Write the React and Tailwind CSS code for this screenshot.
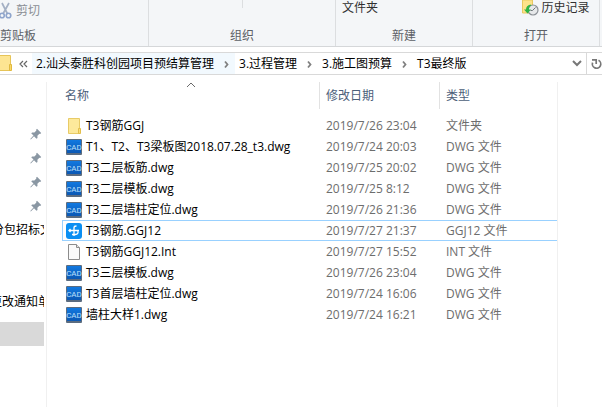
import React, { useState } from 'react';

const CRUMBS = ['2.汕头泰胜科创园项目预结算管理', '3.过程管理', '3.施工图预算', 'T3最终版'];

const FILES = [
  { name: 'T3钢筋GGJ', date: '2019/7/26 23:04', type: '文件夹', icon: 'folder' },
  { name: 'T1、T2、T3梁板图2018.07.28_t3.dwg', date: '2019/7/24 20:03', type: 'DWG 文件', icon: 'dwg' },
  { name: 'T3二层板筋.dwg', date: '2019/7/25 20:02', type: 'DWG 文件', icon: 'dwg' },
  { name: 'T3二层模板.dwg', date: '2019/7/25 8:12', type: 'DWG 文件', icon: 'dwg' },
  { name: 'T3二层墙柱定位.dwg', date: '2019/7/26 21:36', type: 'DWG 文件', icon: 'dwg' },
  { name: 'T3钢筋.GGJ12', date: '2019/7/27 21:37', type: 'GGJ12 文件', icon: 'ggj' },
  { name: 'T3钢筋GGJ12.Int', date: '2019/7/27 15:52', type: 'INT 文件', icon: 'blank' },
  { name: 'T3三层模板.dwg', date: '2019/7/26 23:04', type: 'DWG 文件', icon: 'dwg' },
  { name: 'T3首层墙柱定位.dwg', date: '2019/7/24 16:06', type: 'DWG 文件', icon: 'dwg' },
  { name: '墙柱大样1.dwg', date: '2019/7/24 16:21', type: 'DWG 文件', icon: 'dwg' },
];

const FolderIcon = () => (
  <svg width="16" height="16" viewBox="0 0 16 16" className="shrink-0">
    <path d="M2.5.5h11v15h-11z" fill="#fde99b" stroke="#e8cb67" />
    <path d="M12.5 10.5h2v5h-2z" fill="#fbdf7c" stroke="#e3bf4c" />
  </svg>
);

const DwgIcon = () => (
  <svg width="16" height="16" viewBox="0 0 16 16" className="shrink-0">
    <defs>
      <linearGradient id="dwg" x1="0" y1="0" x2="0" y2="1">
        <stop offset="0" stopColor="#1279e0" />
        <stop offset="1" stopColor="#0b58b4" />
      </linearGradient>
    </defs>
    <rect width="16" height="16" rx="1" fill="#5b6c80" />
    <rect x="1" y="1" width="14" height="13" fill="url(#dwg)" />
    <text x="8" y="11" textAnchor="middle" fontSize="8" fill="#bfe0fb" fontFamily="Roboto, sans-serif">CAD</text>
  </svg>
);

const GgjIcon = () => (
  <svg width="16" height="16" viewBox="0 0 16 16" className="shrink-0">
    <rect width="16" height="16" rx="3" fill="#0b8ff2" />
    <path
      d="M8 13V4.8C8 3.500 8.700 3 10.500 3M3 7.500h10M4.500 6L3 7.500 4.500 9M11.800 8c.8 1.800-.3 3.500-2.300 3.500H6"
      fill="none"
      stroke="#fff"
      strokeWidth="1.300"
    />
  </svg>
);

const BlankIcon = () => (
  <svg width="16" height="16" viewBox="0 0 16 16" className="shrink-0">
    <path d="M2.500.5h8l3 3v12h-11z" fill="#fafafa" stroke="#8c8c8c" />
    <path d="M10.500.5v3h3" fill="#e4e4e4" stroke="#8c8c8c" />
  </svg>
);

const ICONS = { folder: FolderIcon, dwg: DwgIcon, ggj: GgjIcon, blank: BlankIcon };

const PinIcon = () => (
  <svg width="12" height="12" viewBox="0 0 12 12">
    <path d="M7 .8L11.200 5l-1 .9-.8-.2-2 2 .1 2.200-1 .9L4 8.300.8 11.400l-.5-.5L3.500 7.600 1.200 5.300l1-.9 2.200.1 2-2-.3-.8z" fill="#8a97a3" />
  </svg>
);

const ScissorsIcon = () => (
  <svg width="12" height="18" viewBox="0 0 12 18" fill="none" className="shrink-0">
    <path d="M2 1l5.300 10.500M9 1L3.200 11.500" stroke="#a4b0c4" strokeWidth="1.700" />
    <circle cx="2" cy="13.500" r="2.300" stroke="#8fa5cc" strokeWidth="1.600" />
    <circle cx="8.500" cy="13.500" r="2.300" stroke="#8fa5cc" strokeWidth="1.600" />
  </svg>
);

const HistoryIcon = () => (
  <svg width="17" height="16" viewBox="0 0 17 16" className="shrink-0">
    <path d="M.5 0h10v13H.5z" fill="#fce28a" stroke="#e8c95f" />
    <circle cx="11" cy="10" r="5" fill="#e6e8ea" stroke="#8b9096" strokeWidth="1.200" />
    <path d="M10.500 10.500l3-3M10.500 10.500h-2" stroke="#6f757b" />
    <path d="M8.500 4.500C5.500 5 4 7 4 9.500H2l3.500 4 3.500-4H7c0-2 .5-3.500 2.500-4z" fill="#2fb344" />
  </svg>
);

const CrumbArrow = () => (
  <svg width="17" height="18" viewBox="0 0 17 18" fill="none" stroke="#808080" strokeWidth="1.800">
    <path d="M7 6.500L9.500 9.500 7 12.500" />
  </svg>
);

const RibbonGroup = ({ label, className, children }) => (
  <section className={`flex shrink-0 flex-col justify-between ${className}`}>
    <div className="flex h-4 items-center justify-center">{children}</div>
    <div className="h-5 text-center leading-5 text-[#5c6066]">{label}</div>
  </section>
);

const Ribbon = () => (
  <header className="flex overflow-hidden border-b border-[#d5d7d9] bg-[#f4f6f8] text-[#303030]">
    <div className="flex w-[149px] shrink-0 flex-col border-r border-[#dcdee0] pt-0.5">
      <button className="flex h-[18px] items-center gap-1 text-[#8a8e94]">
        <ScissorsIcon />
        剪切
      </button>
      <div className="mt-1.5 h-5 leading-5 text-[#5c6066]">剪贴板</div>
    </div>
    <RibbonGroup label="组织" className="w-[187px] border-r border-[#dcdee0]">
      <span className="h-2 w-px self-start bg-[#dcdee0]" />
    </RibbonGroup>
    <RibbonGroup label="新建" className="w-[137px] border-r border-[#dcdee0]">
      <button className="mr-auto ml-1.5">文件夹</button>
    </RibbonGroup>
    <RibbonGroup label="打开" className="w-[127px] border-r border-[#dcdee0]">
      <button className="ml-10 flex items-center gap-0.5 whitespace-nowrap">
        <HistoryIcon />
        历史记录
      </button>
    </RibbonGroup>
  </header>
);

const AddressBar = () => (
  <nav className="mt-[5px] flex h-[23px] items-center overflow-hidden border-y border-[#d9d9d9]">
    <svg width="12" height="17" viewBox="0 0 12 17" className="shrink-0">
      <path d="M-1 .5h11.500v15H-1z" fill="#fde592" stroke="#e6c458" />
      <path d="M9.500 9.500h2v6h-2z" fill="#fbd968" stroke="#e0b93f" />
    </svg>
    <button aria-label="上级" className="flex w-5 shrink-0 justify-end pr-1">
      <svg width="9" height="8" viewBox="0 0 9 8" fill="none" stroke="#666" strokeWidth="1.200">
        <path d="M4 1L1 4l3 3M8 1L5 4l3 3" />
      </svg>
    </button>
    {CRUMBS.map((crumb, i) => (
      <div key={crumb} className={`flex h-full shrink-0 items-center text-black ${i === 0 ? 'bg-[#f2f9fe]' : ''}`}>
        <a href="#" className="px-1">{crumb}</a>
        {i < CRUMBS.length - 1 && <CrumbArrow />}
      </div>
    ))}
    <button aria-label="展开" className="ml-auto flex h-full w-[19px] shrink-0 items-center justify-center border-r border-[#d9d9d9]">
      <svg width="10" height="7" viewBox="0 0 10 7" fill="none" stroke="#777" strokeWidth="2">
        <path d="M1 1l4 4 4-4" />
      </svg>
    </button>
    <button aria-label="刷新" className="flex w-[15px] shrink-0 justify-end">
      <svg width="11" height="12" viewBox="0 0 11 12" fill="none" stroke="#777" strokeWidth="1.700">
        <path d="M7.500 2.300A4.200 4.200 0 1 1 1.600 4.600M1 1.800h4.200V6" />
      </svg>
    </button>
  </nav>
);

const Sidebar = () => (
  <aside className="flex w-[47px] shrink-0 flex-col border-r border-[#f0f0f0] pt-10 text-black">
    {[0, 1, 2, 3].map((n) => (
      <div key={n} className="flex h-6 items-center justify-end pr-1">
        <PinIcon />
      </div>
    ))}
    <div className="flex h-6 w-11 items-center overflow-hidden whitespace-nowrap">
      <span className="-ml-2">分包招标文</span>
    </div>
    <div className="mt-12 flex h-6 w-11 items-center overflow-hidden whitespace-nowrap">
      <span className="-ml-2.5">更改通知单</span>
    </div>
    <div className="mt-2 h-6 w-11 bg-[#d9d9d9]" />
  </aside>
);

const FileTable = ({ selected, onSelect }) => (
  <table className="w-full table-fixed border-separate border-spacing-0 text-left">
    <thead className="text-[#4c607a]">
      <tr className="h-[27px]">
        <th className="relative p-0 pl-[3px] font-normal">
          名称
          <svg width="9" height="6" viewBox="0 0 9 6" fill="none" stroke="#6b6b6b" className="absolute top-0 left-1/2 -translate-x-1/2">
            <path d="M.5 5l4-4 4 4" />
          </svg>
        </th>
        <th className="w-[120px] border-l border-[#e2e2e2] p-0 pl-1.5 font-normal">修改日期</th>
        <th className="w-[118px] border-l border-[#e2e2e2] p-0 pl-1.5 font-normal">类型</th>
      </tr>
    </thead>
    <tbody>
      <tr className="h-1.5">
        <td colSpan={3} className="p-0" />
      </tr>
      {FILES.map((file, i) => {
        const Icon = ICONS[file.icon];
        const edge = selected === i ? 'border-[#99d1ff]' : 'border-transparent';
        return (
          <tr key={file.name} onClick={() => onSelect(i)} className="h-[21px]">
            <td className={`border-y border-l p-0 pl-[3px] text-black ${edge}`}>
              <div className="flex items-center gap-1 whitespace-nowrap">
                <Icon />
                {file.name}
              </div>
            </td>
            <td className={`border-y p-0 pl-[7px] whitespace-nowrap text-[#6d6d6d] ${edge}`}>{file.date}</td>
            <td className={`border-y p-0 pl-[7px] whitespace-nowrap text-[#6d6d6d] ${edge}`}>{file.type}</td>
          </tr>
        );
      })}
    </tbody>
  </table>
);

const App = () => {
  const [selected, setSelected] = useState(5);

  return (
    <div className="flex min-h-screen flex-col bg-white font-['Open_Sans','Noto_Sans_CJK_SC',sans-serif] text-[12px] leading-4">
      <Ribbon />
      <AddressBar />
      <div className="mt-[7px] flex flex-1">
        <Sidebar />
        <main className="mr-11 min-w-0 flex-1 border-r border-[#f0f0f0] pl-[15px]">
          <FileTable selected={selected} onSelect={setSelected} />
        </main>
      </div>
    </div>
  );
};

export default App;
